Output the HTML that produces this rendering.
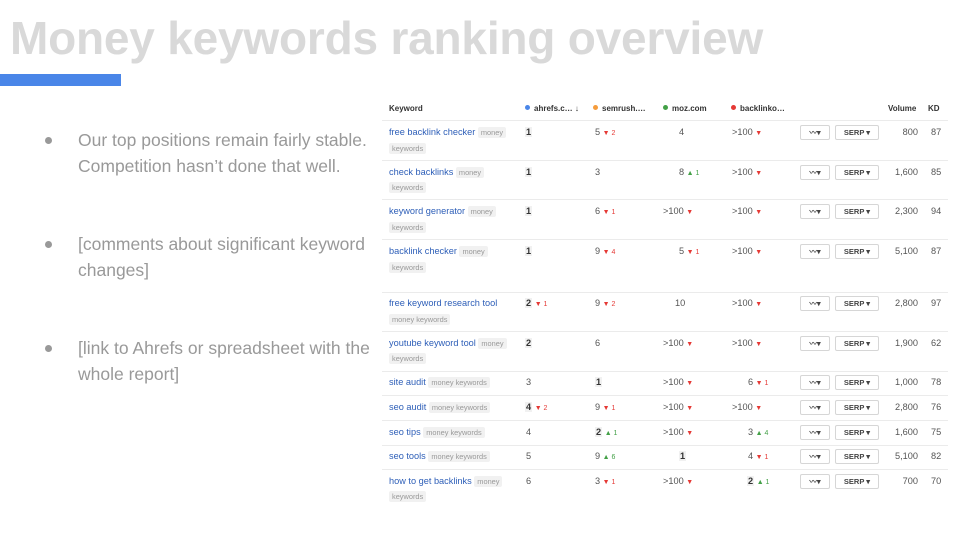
<!DOCTYPE html>
<html><head><meta charset="utf-8"><style>
*{margin:0;padding:0;box-sizing:border-box}
body{width:960px;height:540px;background:#fff;position:relative;overflow:hidden;font-family:"Liberation Sans",Arial,sans-serif}
.t{position:absolute;left:10px;top:11px;font-size:46px;font-weight:bold;color:#d9d9d9;letter-spacing:-0.2px;white-space:nowrap}
.bar{position:absolute;left:0;top:74px;width:121px;height:12px;background:#4a86e8}
.b{position:absolute;left:78px;font-size:17.5px;color:#999;line-height:26px;white-space:nowrap}
.b:before{content:"";position:absolute;left:-33px;top:10px;width:7px;height:7px;border-radius:50%;background:#999}
.a{position:absolute;font-size:9.2px;color:#555;white-space:nowrap;line-height:11px}
.h{font-weight:bold;color:#333;font-size:8px}
.k{color:#2e5fb8}
.g{background:#f1f1f1;color:#999;font-size:7.4px;padding:1px 3px;border-radius:2px}
.s{font-weight:bold;color:#333;background:#f1f1f1;padding:0 1px}
.d{color:#e53935;font-size:7px}
.u{color:#43a047;font-size:7px}
.line{position:absolute;left:382px;width:566px;height:1px;background:#ebebeb}
.btn{position:absolute;height:15px;border:1px solid #d6d6d6;border-radius:2px;font-size:7.5px;font-weight:bold;color:#444;text-align:center;line-height:13px}
.dot{display:inline-block;width:5px;height:5px;border-radius:50%;margin-right:4px;vertical-align:1px}
</style></head><body>
<div class="t">Money keywords ranking overview</div>
<div class="bar"></div>
<div class="b" style="top:127px">Our top positions remain fairly stable.<br>Competition hasn’t done that well.</div>
<div class="b" style="top:231px">[comments about significant keyword<br>changes]</div>
<div class="b" style="top:335px">[link to Ahrefs or spreadsheet with the<br>whole report]</div>

<div class="a h" style="left:389px;top:103px">Keyword</div>
<div class="a h" style="left:525px;top:103px"><span class="dot" style="background:#4a86e8"></span>ahrefs.c… ↓</div>
<div class="a h" style="left:593px;top:103px"><span class="dot" style="background:#f59c3c"></span>semrush.…</div>
<div class="a h" style="left:663px;top:103px"><span class="dot" style="background:#43a047"></span>moz.com</div>
<div class="a h" style="left:731px;top:103px"><span class="dot" style="background:#e53935"></span>backlinko…</div>
<div class="a h" style="left:888px;top:103px">Volume</div>
<div class="a h" style="left:928px;top:103px">KD</div>

<div class="line" style="top:120px"></div><div class="line" style="top:160px"></div><div class="line" style="top:199px"></div><div class="line" style="top:239px"></div><div class="line" style="top:292px"></div><div class="line" style="top:331px"></div><div class="line" style="top:371px"></div><div class="line" style="top:395px"></div><div class="line" style="top:420px"></div><div class="line" style="top:445px"></div><div class="line" style="top:469px"></div>

<div class="a k" style="left:389px;top:127px">free backlink checker <span class="g">money</span></div>
<div class="a" style="left:389px;top:143px"><span class="g">keywords</span></div>
<div class="a" style="left:525px;top:127px"><span class="s">1</span></div>
<div class="a" style="left:595px;top:127px">5 <span class="d">▼ 2</span></div>
<div class="a" style="left:679px;top:127px">4</div>
<div class="a" style="left:732px;top:127px">&gt;100 <span class="d">▼</span></div>

<div class="a k" style="left:389px;top:167px">check backlinks <span class="g">money</span></div>
<div class="a" style="left:389px;top:182px"><span class="g">keywords</span></div>
<div class="a" style="left:525px;top:167px"><span class="s">1</span></div>
<div class="a" style="left:595px;top:167px">3</div>
<div class="a" style="left:679px;top:167px">8 <span class="u">▲ 1</span></div>
<div class="a" style="left:732px;top:167px">&gt;100 <span class="d">▼</span></div>

<div class="a k" style="left:389px;top:206px">keyword generator <span class="g">money</span></div>
<div class="a" style="left:389px;top:222px"><span class="g">keywords</span></div>
<div class="a" style="left:525px;top:206px"><span class="s">1</span></div>
<div class="a" style="left:595px;top:206px">6 <span class="d">▼ 1</span></div>
<div class="a" style="left:663px;top:206px">&gt;100 <span class="d">▼</span></div>
<div class="a" style="left:732px;top:206px">&gt;100 <span class="d">▼</span></div>

<div class="a k" style="left:389px;top:246px">backlink checker <span class="g">money</span></div>
<div class="a" style="left:389px;top:262px"><span class="g">keywords</span></div>
<div class="a" style="left:525px;top:246px"><span class="s">1</span></div>
<div class="a" style="left:595px;top:246px">9 <span class="d">▼ 4</span></div>
<div class="a" style="left:679px;top:246px">5 <span class="d">▼ 1</span></div>
<div class="a" style="left:732px;top:246px">&gt;100 <span class="d">▼</span></div>

<div class="a k" style="left:389px;top:298px">free keyword research tool</div>
<div class="a" style="left:389px;top:314px"><span class="g">money keywords</span></div>
<div class="a" style="left:525px;top:298px"><span class="s">2</span> <span class="d">▼ 1</span></div>
<div class="a" style="left:595px;top:298px">9 <span class="d">▼ 2</span></div>
<div class="a" style="left:675px;top:298px">10</div>
<div class="a" style="left:732px;top:298px">&gt;100 <span class="d">▼</span></div>

<div class="a k" style="left:389px;top:338px">youtube keyword tool <span class="g">money</span></div>
<div class="a" style="left:389px;top:353px"><span class="g">keywords</span></div>
<div class="a" style="left:525px;top:338px"><span class="s">2</span></div>
<div class="a" style="left:595px;top:338px">6</div>
<div class="a" style="left:663px;top:338px">&gt;100 <span class="d">▼</span></div>
<div class="a" style="left:732px;top:338px">&gt;100 <span class="d">▼</span></div>

<div class="a k" style="left:389px;top:377px">site audit <span class="g">money keywords</span></div>
<div class="a" style="left:526px;top:377px">3</div>
<div class="a" style="left:595px;top:377px"><span class="s">1</span></div>
<div class="a" style="left:663px;top:377px">&gt;100 <span class="d">▼</span></div>
<div class="a" style="left:748px;top:377px">6 <span class="d">▼ 1</span></div>

<div class="a k" style="left:389px;top:402px">seo audit <span class="g">money keywords</span></div>
<div class="a" style="left:525px;top:402px"><span class="s">4</span> <span class="d">▼ 2</span></div>
<div class="a" style="left:595px;top:402px">9 <span class="d">▼ 1</span></div>
<div class="a" style="left:663px;top:402px">&gt;100 <span class="d">▼</span></div>
<div class="a" style="left:732px;top:402px">&gt;100 <span class="d">▼</span></div>

<div class="a k" style="left:389px;top:427px">seo tips <span class="g">money keywords</span></div>
<div class="a" style="left:526px;top:427px">4</div>
<div class="a" style="left:595px;top:427px"><span class="s">2</span> <span class="u">▲ 1</span></div>
<div class="a" style="left:663px;top:427px">&gt;100 <span class="d">▼</span></div>
<div class="a" style="left:748px;top:427px">3 <span class="u">▲ 4</span></div>

<div class="a k" style="left:389px;top:451px">seo tools <span class="g">money keywords</span></div>
<div class="a" style="left:526px;top:451px">5</div>
<div class="a" style="left:595px;top:451px">9 <span class="u">▲ 6</span></div>
<div class="a" style="left:679px;top:451px"><span class="s">1</span></div>
<div class="a" style="left:748px;top:451px">4 <span class="d">▼ 1</span></div>

<div class="a k" style="left:389px;top:476px">how to get backlinks <span class="g">money</span></div>
<div class="a" style="left:389px;top:491px"><span class="g">keywords</span></div>
<div class="a" style="left:526px;top:476px">6</div>
<div class="a" style="left:595px;top:476px">3 <span class="d">▼ 1</span></div>
<div class="a" style="left:663px;top:476px">&gt;100 <span class="d">▼</span></div>
<div class="a" style="left:747px;top:476px"><span class="s">2</span> <span class="u">▲ 1</span></div>

<div style="position:absolute;left:0;top:0">
<div class="btn" style="left:800px;top:125px;width:30px">〰▾</div><div class="btn" style="left:835px;top:125px;width:44px">SERP ▾</div>
<div class="btn" style="left:800px;top:165px;width:30px">〰▾</div><div class="btn" style="left:835px;top:165px;width:44px">SERP ▾</div>
<div class="btn" style="left:800px;top:204px;width:30px">〰▾</div><div class="btn" style="left:835px;top:204px;width:44px">SERP ▾</div>
<div class="btn" style="left:800px;top:244px;width:30px">〰▾</div><div class="btn" style="left:835px;top:244px;width:44px">SERP ▾</div>
<div class="btn" style="left:800px;top:296px;width:30px">〰▾</div><div class="btn" style="left:835px;top:296px;width:44px">SERP ▾</div>
<div class="btn" style="left:800px;top:336px;width:30px">〰▾</div><div class="btn" style="left:835px;top:336px;width:44px">SERP ▾</div>
<div class="btn" style="left:800px;top:375px;width:30px">〰▾</div><div class="btn" style="left:835px;top:375px;width:44px">SERP ▾</div>
<div class="btn" style="left:800px;top:400px;width:30px">〰▾</div><div class="btn" style="left:835px;top:400px;width:44px">SERP ▾</div>
<div class="btn" style="left:800px;top:425px;width:30px">〰▾</div><div class="btn" style="left:835px;top:425px;width:44px">SERP ▾</div>
<div class="btn" style="left:800px;top:449px;width:30px">〰▾</div><div class="btn" style="left:835px;top:449px;width:44px">SERP ▾</div>
<div class="btn" style="left:800px;top:474px;width:30px">〰▾</div><div class="btn" style="left:835px;top:474px;width:44px">SERP ▾</div>
</div>
<div class="a" style="left:880px;width:38px;text-align:right;top:127px">800</div><div class="a" style="left:931px;top:127px">87</div>
<div class="a" style="left:880px;width:38px;text-align:right;top:167px">1,600</div><div class="a" style="left:931px;top:167px">85</div>
<div class="a" style="left:880px;width:38px;text-align:right;top:206px">2,300</div><div class="a" style="left:931px;top:206px">94</div>
<div class="a" style="left:880px;width:38px;text-align:right;top:246px">5,100</div><div class="a" style="left:931px;top:246px">87</div>
<div class="a" style="left:880px;width:38px;text-align:right;top:298px">2,800</div><div class="a" style="left:931px;top:298px">97</div>
<div class="a" style="left:880px;width:38px;text-align:right;top:338px">1,900</div><div class="a" style="left:931px;top:338px">62</div>
<div class="a" style="left:880px;width:38px;text-align:right;top:377px">1,000</div><div class="a" style="left:931px;top:377px">78</div>
<div class="a" style="left:880px;width:38px;text-align:right;top:402px">2,800</div><div class="a" style="left:931px;top:402px">76</div>
<div class="a" style="left:880px;width:38px;text-align:right;top:427px">1,600</div><div class="a" style="left:931px;top:427px">75</div>
<div class="a" style="left:880px;width:38px;text-align:right;top:451px">5,100</div><div class="a" style="left:931px;top:451px">82</div>
<div class="a" style="left:880px;width:38px;text-align:right;top:476px">700</div><div class="a" style="left:931px;top:476px">70</div>
</body></html>
